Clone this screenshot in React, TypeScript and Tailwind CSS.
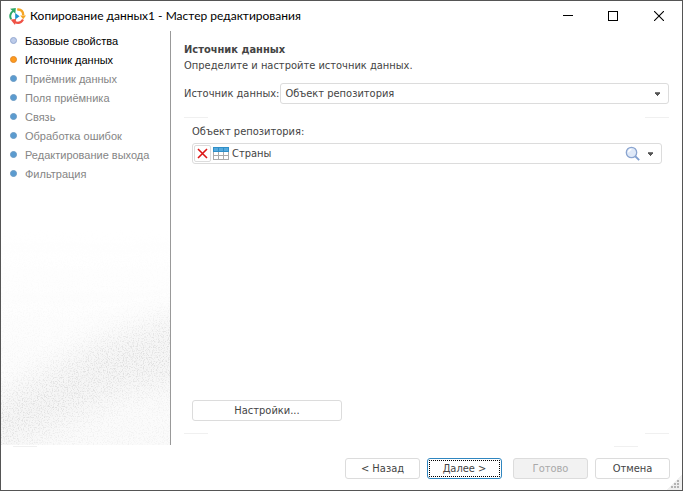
import type { ReactNode } from "react";

const steps = [
  { title: "Базовые свойства", state: "done" },
  { title: "Источник данных", state: "current" },
  { title: "Приёмник данных", state: "next" },
  { title: "Поля приёмника", state: "next" },
  { title: "Связь", state: "next" },
  { title: "Обработка ошибок", state: "next" },
  { title: "Редактирование выхода", state: "next" },
  { title: "Фильтрация", state: "next" },
];

const dotStyles: Record<string, string> = {
  done: "border-[#94a8d0] bg-[#bccbe9]",
  current: "border-[#e08a2c] bg-[#ff9a1c]",
  next: "border-[#6b9bc4] bg-[#5a9bd0]",
};

function AppLogo() {
  return (
    <svg width="17" height="17" viewBox="0 0 17 17" aria-hidden="true">
      <path d="M2.2 11.2C0.4 8.6 1.2 4.6 4.4 2.8" fill="none" stroke="#2fa866" strokeWidth="2" />
      <path d="M1.2 0.8L6.8 0L6.4 5.8Z" fill="#2fa866" />
      <path d="M8.2 1.6C12.2 1 14.4 3.8 14.2 7.4" fill="none" stroke="#f5a524" strokeWidth="2.4" />
      <path d="M11.2 7.4H17L14.2 11.2Z" fill="#f5a524" />
      <path d="M14 11.4C12.2 14.8 9 15.6 5.6 14" fill="none" stroke="#ef5246" strokeWidth="2.2" />
      <path d="M1.6 11.6L7.2 11L6 17Z" fill="#ef5246" />
      <path d="M6.2 5L10.6 8.2L6.2 11.4Z" fill="#1f93cf" />
    </svg>
  );
}

function Caret() {
  return (
    <svg width="7" height="4" viewBox="0 0 7 4" shapeRendering="crispEdges" aria-hidden="true">
      <path d="M1 0H6V1H1Z" fill="#777" />
      <path d="M1 1H6V2H5V3H2V2H1ZM3 3H4V4H3Z" fill="#555" />
    </svg>
  );
}

function TableIcon() {
  return (
    <svg width="16" height="13" viewBox="0 0 16 13" shapeRendering="crispEdges" aria-hidden="true">
      <path d="M0 0H16V13H0Z" fill="#aaa" />
      <path d="M0 0H16V5H0Z" fill="#2f8fc8" />
      <path d="M1 1H5V4H1ZM6 1H10V4H6ZM11 1H15V4H11Z" fill="#56aadd" />
      <path d="M1 5H5V8H1ZM6 5H10V8H6ZM11 5H15V8H11ZM1 9H5V12H1ZM6 9H10V12H6ZM11 9H15V12H11Z" fill="#fff" />
    </svg>
  );
}

function SearchIcon() {
  return (
    <svg width="16" height="16" viewBox="0 0 16 16" aria-hidden="true">
      <path d="M10 10L14.2 14.2" stroke="#7f9fd0" strokeWidth="1.8" />
      <circle cx="6.5" cy="6.5" r="5.2" fill="#dfe9f8" stroke="#8ba5d0" strokeWidth="1.3" />
      <path d="M3.6 6.2A3 3 0 0 1 6.4 3.5" fill="none" stroke="#fff" strokeWidth="1.3" />
    </svg>
  );
}

// Grainy grey band that rises from left to right behind the steps
function SidebarTexture() {
  return (
    <svg className="absolute inset-x-0 bottom-0 h-[215px] w-full" viewBox="0 0 169 215" preserveAspectRatio="none" aria-hidden="true">
      <defs>
        <filter id="grain" x="0" y="0" width="100%" height="100%">
          <feTurbulence type="fractalNoise" baseFrequency="0.8" numOctaves="3" seed="4" />
          <feColorMatrix values="0 0 0 0 0.5  0 0 0 0 0.5  0 0 0 0 0.5  4 0 0 0 -1.9" />
        </filter>
        <filter id="soft" x="-30%" y="-50%" width="160%" height="200%">
          <feGaussianBlur stdDeviation="14" />
        </filter>
        <linearGradient id="fade" x1="0" y1="0" x2="0" y2="1">
          <stop offset="0" stopColor="#000" />
          <stop offset="0.4" stopColor="#181818" />
          <stop offset="1" stopColor="#3c3c3c" />
        </linearGradient>
        <mask id="band" maskUnits="userSpaceOnUse" x="0" y="0" width="169" height="215">
          <rect width="169" height="215" fill="url(#fade)" />
          <path d="M-40 190L40 145L100 110L210 75V150L120 165L60 195L-40 240Z" fill="#909090" filter="url(#soft)" />
        </mask>
      </defs>
      <g mask="url(#band)">
        <rect width="169" height="215" fill="#888" opacity="0.14" />
        <rect width="169" height="215" filter="url(#grain)" opacity="0.75" />
      </g>
    </svg>
  );
}

function Hairlines() {
  return (
    <div className="flex justify-between">
      <span className="h-px w-6 bg-[#f0f0f0]" />
      <span className="h-px w-6 bg-[#f0f0f0]" />
    </div>
  );
}

function Button({ children, className = "", disabled = false }: { children: ReactNode; className?: string; disabled?: boolean }) {
  return (
    <button
      type="button"
      disabled={disabled}
      className={`flex h-[21px] items-center justify-center rounded-[3px] border ${
        disabled ? "border-[#dcdcdc] bg-[#f2f2f2] text-[#a9a9a9]" : "bg-white"
      } ${className}`}
    >
      {children}
    </button>
  );
}

export default function App() {
  return (
    <div className="flex min-h-screen flex-col border border-[#555] bg-white font-['DejaVu_Sans_Condensed','Noto_Sans',sans-serif] text-[11px] leading-4 text-[#444]">
      <header className="flex h-[30px] items-center pl-2 text-black">
        <AppLogo />
        <h1 className="ml-1 flex-1 font-['Lato',sans-serif] text-xs">Копирование данных1 - Мастер редактирования</h1>
        <button type="button" aria-label="Свернуть" className="flex w-[45px] justify-center">
          <svg width="10" height="10" viewBox="0 0 10 10" shapeRendering="crispEdges">
            <path d="M0 4H10V5H0Z" />
          </svg>
        </button>
        <button type="button" aria-label="Развернуть" className="flex w-[45px] justify-center">
          <svg width="10" height="10" viewBox="0 0 10 10" shapeRendering="crispEdges">
            <path d="M0.5 0.5H9.5V9.5H0.5Z" fill="none" stroke="#000" />
          </svg>
        </button>
        <button type="button" aria-label="Закрыть" className="flex w-[47px] justify-center">
          <svg width="10" height="10" viewBox="0 0 10 10">
            <path d="M0 0L10 10M10 0L0 10" stroke="#000" strokeWidth="1.1" />
          </svg>
        </button>
      </header>

      <div className="flex flex-1">
        <nav className="relative w-[170px] shrink-0 border-r border-[#999] font-['Liberation_Sans',sans-serif]">
          <SidebarTexture />
          <ol className="relative">
            {steps.map((step) => (
              <li
                key={step.title}
                className={`flex h-[19px] items-center gap-2 pl-[9px] ${step.state === "next" ? "text-[#858585]" : "text-black"}`}
                aria-current={step.state === "current" ? "step" : undefined}
              >
                <span className={`size-[7px] rounded-full border ${dotStyles[step.state]}`} />
                {step.title}
              </li>
            ))}
          </ol>
        </nav>

        <main className="flex flex-1 flex-col px-[13px] pt-[11px] pb-[11px]">
          <h2 className="font-bold">Источник данных</h2>
          <p>Определите и настройте источник данных.</p>

          <div className="mt-[9px] flex items-center gap-px">
            <label htmlFor="source">Источник данных:</label>
            <div className="relative flex-1">
              <select
                id="source"
                className="block h-[21px] w-full appearance-none rounded-[3px] border border-[#dcdcdc] bg-white px-1"
              >
                <option>Объект репозитория</option>
              </select>
              <span className="pointer-events-none absolute inset-y-0 right-2 flex items-center">
                <Caret />
              </span>
            </div>
          </div>

          <section className="mt-[13px] flex flex-1 flex-col">
            <Hairlines />
            <div className="flex flex-1 flex-col pt-[6px] pr-[7px] pb-3 pl-2">
              <label htmlFor="object">Объект репозитория:</label>
              <div className="mt-[3px] flex h-[21px] items-center rounded-[3px] border border-[#dcdcdc] pl-px">
                <button
                  type="button"
                  aria-label="Очистить"
                  className="flex size-[17px] items-center justify-center rounded-[2px] border border-[#dcdcdc]"
                >
                  <svg width="11" height="11" viewBox="0 0 11 11">
                    <path d="M1 1L10 10M10 1L1 10" stroke="#dc1616" strokeWidth="1.6" />
                  </svg>
                </button>
                <span className="ml-[2px]">
                  <TableIcon />
                </span>
                <input id="object" defaultValue="Страны" className="min-w-0 flex-1 bg-transparent pl-[3px] outline-none" />
                <button type="button" aria-label="Найти" className="mr-[6px]">
                  <SearchIcon />
                </button>
                <button type="button" aria-label="Открыть список" className="mr-[7px]">
                  <Caret />
                </button>
              </div>
              <Button className="mt-auto w-[150px] border-[#dcdcdc]">Настройки...</Button>
            </div>
            <Hairlines />
          </section>
        </main>
      </div>

      <footer className="relative pt-px">
        <div className="pr-[44px] pl-3">
          <Hairlines />
        </div>
        <div className="flex justify-end pt-[11px] pr-3 pb-[11px]">
          <Button className="w-[75px] border-[#dcdcdc]">&lt; Назад</Button>
          <Button className="ml-[7px] w-[75px] border-[#2f86c0] outline-1 -outline-offset-3 outline-dotted outline-black">
            Далее &gt;
          </Button>
          <Button disabled className="ml-[11px] w-[75px]">
            Готово
          </Button>
          <Button className="ml-[7px] w-[75px] border-[#dcdcdc]">Отмена</Button>
        </div>
        <svg className="absolute right-0 bottom-0" width="16" height="16" viewBox="0 0 16 16" shapeRendering="crispEdges" aria-hidden="true">
          <path d="M16 0V16H0Z" fill="#f0f0f0" />
          <path d="M11 6h2v2h-2zM8 9h2v2h-2zM11 9h2v2h-2zM5 12h2v2h-2zM8 12h2v2h-2zM11 12h2v2h-2z" fill="#b4b4b4" />
        </svg>
      </footer>
    </div>
  );
}
